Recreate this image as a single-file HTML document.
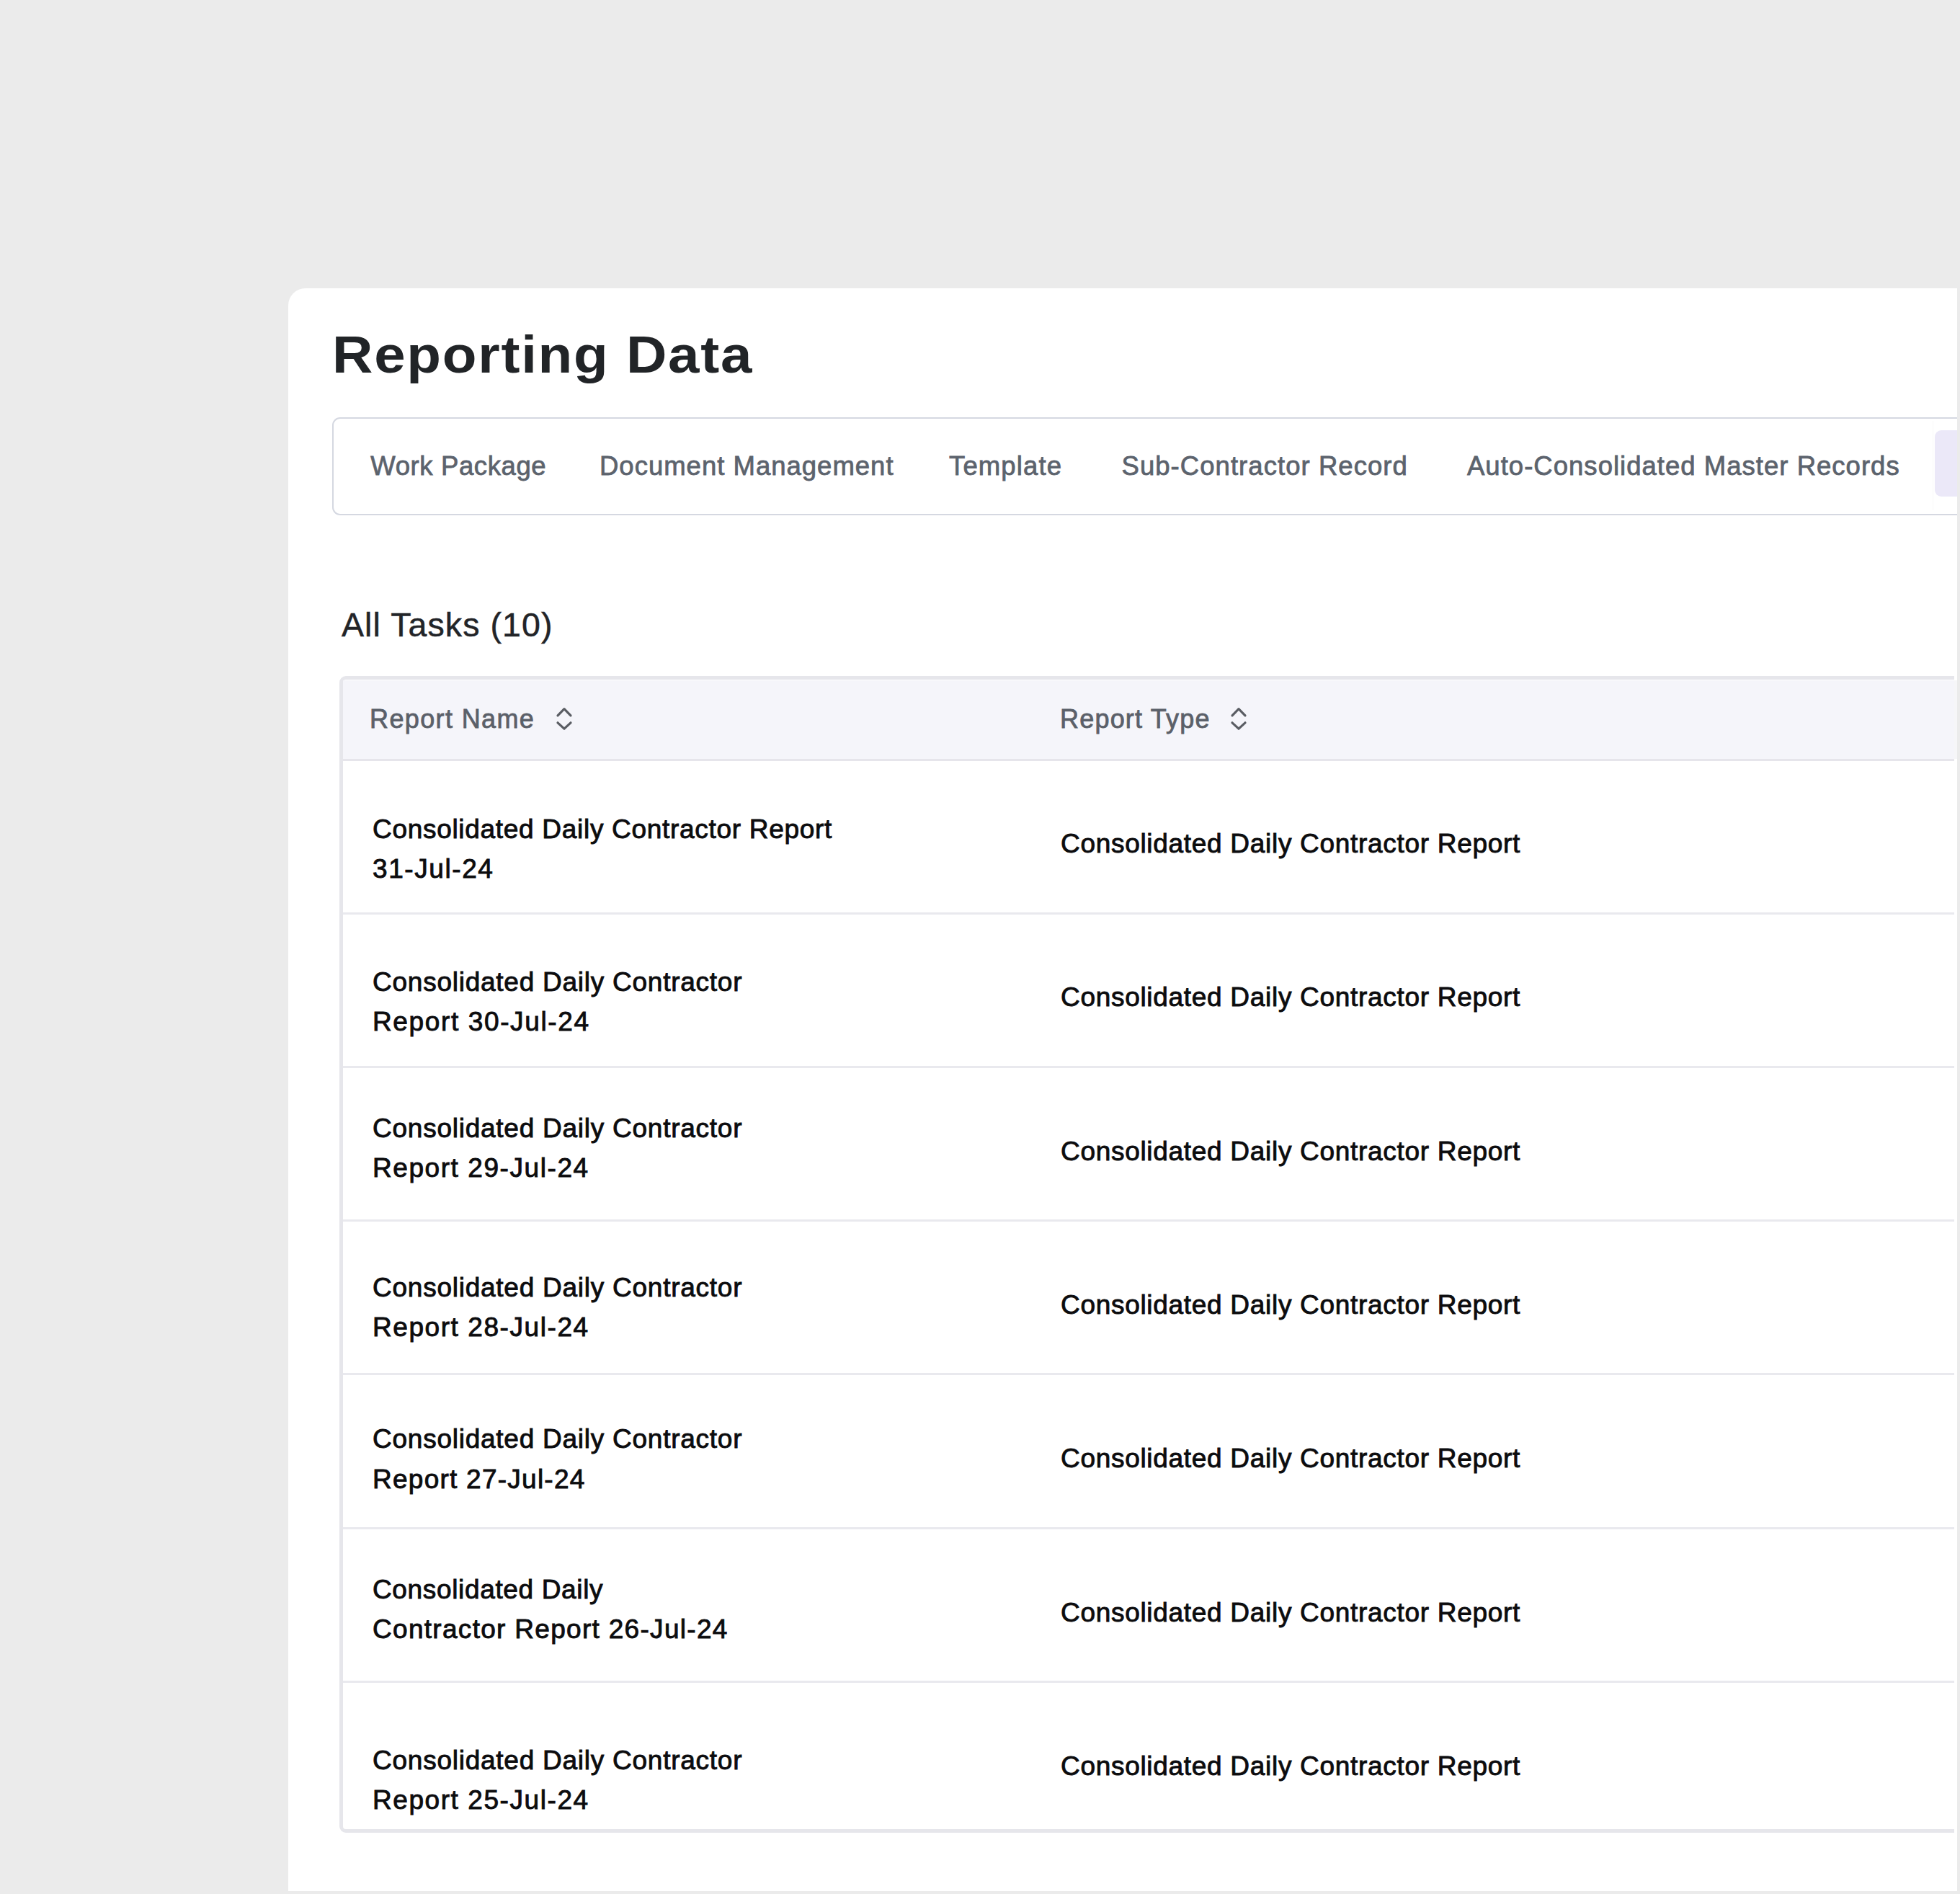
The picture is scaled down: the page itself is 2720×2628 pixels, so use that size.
<!DOCTYPE html>
<html><head><meta charset="utf-8">
<style>
html,body{margin:0;padding:0;}
body{width:2720px;height:2628px;background:#ebebeb;position:relative;overflow:hidden;font-family:"Liberation Sans",sans-serif;}
.card{position:absolute;left:400px;top:400px;width:2316px;height:2224px;background:#fff;border-top-left-radius:24px;}
.t{position:absolute;white-space:nowrap;line-height:1;font-family:"Liberation Sans",sans-serif;}
.title{font-size:72px;font-weight:700;color:#212427;letter-spacing:1.6px;transform:scaleX(1.085);transform-origin:0 0;}
.tab{font-size:36.5px;color:#5c636d;letter-spacing:1px;top:628.5px;-webkit-text-stroke:0.8px #5c636d;}
.all{font-size:46.5px;color:#222428;letter-spacing:1.1px;-webkit-text-stroke:0.5px #222428;}
.hd{font-size:36px;color:#5b6069;letter-spacing:1.05px;top:979.7px;-webkit-text-stroke:0.8px #5b6069;}
.r{font-size:37px;color:#0c0c0e;letter-spacing:0.7px;-webkit-text-stroke:0.9px #0c0c0e;}
.tabbar{position:absolute;left:461px;top:579px;width:2300px;height:131.5px;border:2.5px solid #d5d8e1;border-radius:11px;background:#fff;}
.seam{position:absolute;left:2681.5px;top:584px;width:1px;height:124px;background:#f9f9f9;}
.pill{position:absolute;left:2684.5px;top:597px;width:80px;height:92px;border-radius:9px;background:#ebe8f8;}
.tclip{position:absolute;left:400px;top:900px;width:2312px;height:1700px;overflow:hidden;}
.table{position:absolute;left:71px;top:38px;width:2400px;height:1595px;border:5px solid #e6e6eb;border-radius:9px;background:#fff;}
.thead{position:absolute;left:476px;top:943.5px;width:2236px;height:109px;background:#f5f5fa;}
.thead2{position:absolute;left:2712px;top:943.5px;width:4px;height:109px;background:#f6f6f8;}
.hl{position:absolute;left:476px;width:2236px;height:3px;background:#e9e9ee;}
.hdl{position:absolute;left:476px;top:1052.5px;width:2236px;height:3px;background:#e6e5eb;}
.ic{position:absolute;}
.strip{position:absolute;left:2716px;top:0;width:4px;height:2628px;background:#ebebeb;}
</style></head><body>
<div class="card"></div>
<div class="t title" style="left:461px;top:456px">Reporting Data</div>
<div class="tabbar"></div>
<div class="seam"></div>
<div class="pill"></div>
<div class="t tab" style="left:514.3px;letter-spacing:0.6px">Work Package</div>
<div class="t tab" style="left:832px">Document Management</div>
<div class="t tab" style="left:1317px;letter-spacing:1.14px">Template</div>
<div class="t tab" style="left:1556.5px;letter-spacing:1.05px">Sub-Contractor Record</div>
<div class="t tab" style="left:2036px;letter-spacing:1.02px">Auto-Consolidated Master Records</div>
<div class="t all" style="left:474px;top:844.3px">All Tasks (10)</div>
<div class="tclip"><div class="table"></div></div>
<div class="thead"></div><div class="thead2"></div>
<div class="hdl"></div>
<div class="t hd" style="left:513px;letter-spacing:1.38px">Report Name</div>
<div class="t hd" style="left:1471px;letter-spacing:1.2px">Report Type</div>
<svg class="ic" style="left:768.2px;top:976px" width="30" height="42" viewBox="768.2 976 30 42"><path d="M774.2 992.9 L783.2 983.6 L792.2 992.9 M774.2 1002.8 L783.2 1011.2 L792.2 1002.8" fill="none" stroke="#5a5d63" stroke-width="3.2" stroke-linecap="round" stroke-linejoin="round"/></svg>
<svg class="ic" style="left:1704.4px;top:976px" width="30" height="42" viewBox="1704.4 976 30 42"><path d="M1710.4 992.9 L1719.4 983.6 L1728.4 992.9 M1710.4 1002.8 L1719.4 1011.2 L1728.4 1002.8" fill="none" stroke="#5a5d63" stroke-width="3.2" stroke-linecap="round" stroke-linejoin="round"/></svg>
<div class="t r" style="left:517px;top:1131.9px;letter-spacing:0.7px">Consolidated Daily Contractor Report</div><div class="t r" style="left:517px;top:1186.7px;letter-spacing:1.58px">31-Jul-24</div><div class="t r" style="left:517px;top:1344.0px;letter-spacing:0.75px">Consolidated Daily Contractor</div><div class="t r" style="left:517px;top:1398.6px;letter-spacing:1.63px">Report 30-Jul-24</div><div class="t r" style="left:517px;top:1547.0px;letter-spacing:0.75px">Consolidated Daily Contractor</div><div class="t r" style="left:517px;top:1602.0px;letter-spacing:1.57px">Report 29-Jul-24</div><div class="t r" style="left:517px;top:1768.0px;letter-spacing:0.75px">Consolidated Daily Contractor</div><div class="t r" style="left:517px;top:1823.0px;letter-spacing:1.57px">Report 28-Jul-24</div><div class="t r" style="left:517px;top:1978.3px;letter-spacing:0.75px">Consolidated Daily Contractor</div><div class="t r" style="left:517px;top:2033.6px;letter-spacing:1.25px">Report 27-Jul-24</div><div class="t r" style="left:517px;top:2187.0px;letter-spacing:0.65px">Consolidated Daily</div><div class="t r" style="left:517px;top:2242.2px;letter-spacing:1.3px">Contractor Report 26-Jul-24</div><div class="t r" style="left:517px;top:2424.4px;letter-spacing:0.75px">Consolidated Daily Contractor</div><div class="t r" style="left:517px;top:2479.0px;letter-spacing:1.57px">Report 25-Jul-24</div><div class="t r" style="left:1472px;top:1152.4px">Consolidated Daily Contractor Report</div><div class="t r" style="left:1472px;top:1365.0px">Consolidated Daily Contractor Report</div><div class="t r" style="left:1472px;top:1578.7px">Consolidated Daily Contractor Report</div><div class="t r" style="left:1472px;top:1791.6px">Consolidated Daily Contractor Report</div><div class="t r" style="left:1472px;top:2005.0px">Consolidated Daily Contractor Report</div><div class="t r" style="left:1472px;top:2218.5px">Consolidated Daily Contractor Report</div><div class="t r" style="left:1472px;top:2432.0px">Consolidated Daily Contractor Report</div><div class="hl" style="top:1265.5px"></div><div class="hl" style="top:1478.9px"></div><div class="hl" style="top:1691.8px"></div><div class="hl" style="top:1905.3px"></div><div class="hl" style="top:2118.7px"></div><div class="hl" style="top:2332.3px"></div>
<div class="strip"></div>
</body></html>
